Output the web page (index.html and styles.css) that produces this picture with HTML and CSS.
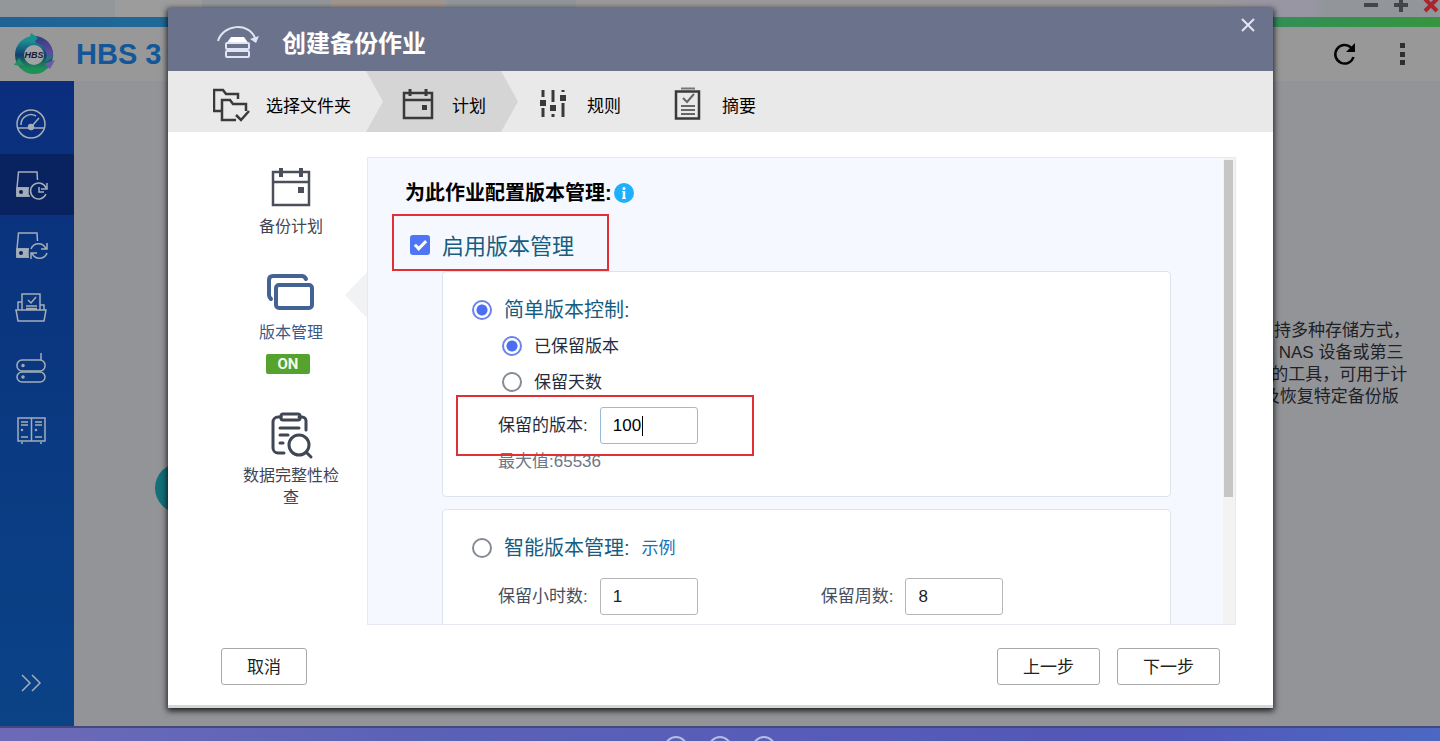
FILE: index.html
```html
<!DOCTYPE html>
<html lang="zh-CN">
<head>
    <meta charset="UTF-8">
    <meta name="viewport" content="width=device-width, initial-scale=1.0">
    <title>HBS 3</title>
    <link rel="stylesheet" href="styles.css">
</head>
<body>

<div class="window">
    <div class="titlebar">
        <button type="button" class="win-btn" aria-label="最小化">
            <svg width="16" height="16" viewBox="0 0 16 16"><path d="M1 8h14" stroke="#434549" stroke-width="4"/></svg>
        </button>
        <button type="button" class="win-btn" aria-label="最大化">
            <svg width="16" height="16" viewBox="0 0 16 16"><path d="M1 8h14M8 1v14" stroke="#434549" stroke-width="4"/></svg>
        </button>
        <button type="button" class="win-btn" aria-label="关闭窗口">
            <svg width="16" height="16" viewBox="0 0 16 16"><path d="M2 2l12 12M14 2L2 14" stroke="#a8242f" stroke-width="4"/></svg>
        </button>
    </div>
    <div class="accent"></div>

    <header class="app-header">
        <svg class="logo" width="42" height="44" viewBox="0 0 42 44">
            <defs>
                <linearGradient id="ringA" x1="0" y1="0" x2="0" y2="1">
                    <stop offset="0" stop-color="#1c8d93"/>
                    <stop offset="0.5" stop-color="#123f70"/>
                    <stop offset="1" stop-color="#1f9156"/>
                </linearGradient>
                <linearGradient id="ringB" x1="0" y1="0" x2="0" y2="1">
                    <stop offset="0" stop-color="#2b3f7d"/>
                    <stop offset="0.6" stop-color="#5d4a9c"/>
                    <stop offset="1" stop-color="#178078"/>
                </linearGradient>
            </defs>
            <circle cx="20" cy="23" r="14" fill="none" stroke="url(#ringA)" stroke-width="10"/>
            <path d="M20 4a19 19 0 0 1 19 22l-8 4A13 13 0 0 0 22 11z" fill="url(#ringB)"/>
            <path d="M17 1l7 5-6 6-3-4z" fill="#1a9090"/>
            <path d="M41 28l-5 9-6-5z" fill="#6c5aa8"/>
            <path d="M0 33l5-7 6 8z" fill="#228d60"/>
            <circle cx="20" cy="23" r="10" fill="#a3a3a5"/>
            <text x="20" y="26" text-anchor="middle" class="logo-text">HBS</text>
        </svg>
        <h1>HBS 3</h1>
        <button type="button" class="icon-btn" aria-label="刷新">
            <svg width="24" height="24" viewBox="0 0 24 24">
                <path d="M21.500 15A9.300 9.300 0 1 1 19 5.500" fill="none" stroke="#050505" stroke-width="2.500"/>
                <path d="M23 1v9h-9z" fill="#050505"/>
            </svg>
        </button>
        <button type="button" class="icon-btn" aria-label="更多">
            <svg width="24" height="24" viewBox="0 0 24 24" fill="#2e2e2e">
                <rect x="10" y="1" width="5" height="5"/><rect x="10" y="10" width="5" height="5"/><rect x="10" y="18" width="5" height="5"/>
            </svg>
        </button>
    </header>

    <div class="app-body">
        <nav class="sidebar">
            <a href="#overview" aria-label="概述">
                <svg width="34" height="34" viewBox="0 0 34 34">
                    <circle cx="17" cy="17" r="14"/>
                    <path d="M3 21h28M7 18a10 10 0 0 1 15-9M18 19l7-8"/>
                    <circle cx="17" cy="20" r="2.500" class="fill"/>
                </svg>
            </a>
            <a href="#backup" class="current" aria-label="备份与还原">
                <svg width="34" height="34" viewBox="0 0 34 34">
                    <path d="M3 20L4.500 4H23l.500 8M3 20h12M3 20v8h13"/>
                    <path class="fill" d="M3 20h11v8H3z"/>
                    <circle cx="7" cy="24" r="2" class="hole"/>
                    <path d="M32 20a8 8 0 1 0 0 6M33 15v6h-6M25 19v5h5"/>
                </svg>
            </a>
            <a href="#sync" aria-label="同步">
                <svg width="34" height="34" viewBox="0 0 34 34">
                    <path d="M3 20L4.500 4H23l.500 8M3 20h12M3 20v8h12"/>
                    <path class="fill" d="M3 20h11v8H3z"/>
                    <circle cx="7" cy="24" r="2" class="hole"/>
                    <path d="M17 20a8 8 0 0 1 15 0M33 14v6h-6M33 24a8 8 0 0 1-15 0M17 30v-6h6"/>
                </svg>
            </a>
            <a href="#jobs" aria-label="作业">
                <svg width="34" height="34" viewBox="0 0 34 34">
                    <path d="M2 20h30l-2 11H4zM8 20V4h18v16M4 20v-8h4M26 15h4v5M14 10l3 3 5-6M12 16h11M12 18.500h11"/>
                </svg>
            </a>
            <a href="#storage" aria-label="存储空间">
                <svg width="34" height="34" viewBox="0 0 34 34">
                    <rect x="3" y="9" width="28" height="11" rx="5"/>
                    <rect x="3" y="21" width="28" height="10" rx="5"/>
                    <path d="M27 9V2"/>
                    <circle cx="9" cy="14.500" r="1"/><circle cx="9" cy="26" r="1"/>
                </svg>
            </a>
            <a href="#services" aria-label="服务">
                <svg width="34" height="34" viewBox="0 0 34 34">
                    <path d="M4 6h27v23H4zM17.500 6v23M7 10h7M7 13h7M21 10h7M21 13h7M7 25h7M21 25h7M8 30v2M27 30v2"/>
                    <circle cx="8" cy="18" r="0.500"/><circle cx="22" cy="18" r="0.500"/>
                </svg>
            </a>
            <a href="#expand" class="expand" aria-label="展开">
                <svg width="34" height="34" viewBox="0 0 34 34"><path d="M8 8l8 8-8 8M18 8l8 8-8 8"/></svg>
            </a>
        </nav>
        <main class="content">
            <span class="round"></span>
            <p class="intro">支持多种存储方式，<br>的 NAS 设备或第三<br>3 的工具，可用于计<br>(及恢复特定备份版</p>
        </main>
    </div>
</div>

<footer class="taskbar">
    <span></span><span></span><span></span>
</footer>

<div class="overlay">
    <section class="dialog" role="dialog" aria-labelledby="dialogTitle">
        <div class="dialog-header">
            <svg width="44" height="52" viewBox="0 -7 44 52" fill="none" stroke="#dfe5f5" stroke-width="2">
                <path d="M2 16C7-1 33-3 39 13"/>
                <path d="M34 14l9-3-3 7z" fill="#dfe5f5" stroke="none"/>
                <path d="M10 19l5-7h13l5 7z" fill="#fff" stroke="none"/>
                <rect x="10" y="18" width="23" height="6" rx="1"/>
                <rect x="10" y="26" width="23" height="6" rx="1"/>
            </svg>
            <h2 id="dialogTitle">创建备份作业</h2>
            <button type="button" class="close" aria-label="关闭">
                <svg width="14" height="14" viewBox="0 0 14 14"><path d="M1 1l12 12M13 1L1 13" stroke="#e3e6f0" stroke-width="2"/></svg>
            </button>
        </div>

        <ol class="steps">
            <li>
                <svg width="38" height="36" viewBox="0 0 38 36" fill="none" stroke="#3a3a3a" stroke-width="2.500">
                    <path d="M8 24H1V3h9l3 4h12v5"/>
                    <path d="M23 33H9V13h8l3 4h13v7M23 28l5 5 8-9"/>
                </svg>
                选择文件夹
            </li>
            <li class="active">
                <svg width="38" height="36" viewBox="0 0 38 36" fill="none" stroke="#3a3a3a" stroke-width="2.500">
                    <path d="M5 6h28v25H5zM5 13h28"/><path d="M11 2v7M27 2v7" stroke-width="3"/>
                    <path d="M23 18h5v5h-5z" fill="#3a3a3a" stroke="none"/>
                </svg>
                计划
            </li>
            <li>
                <svg width="38" height="36" viewBox="0 0 38 36" fill="none" stroke="#3a3a3a" stroke-width="3">
                    <path d="M9 3v7M9 21v9M19 3v12M19 27v3M29 3v2M29 16v14"/>
                    <path d="M6 13h6v6H6zM16 18h6v6h-6zM26 8h6v6h-6z" fill="#3a3a3a" stroke="none"/>
                </svg>
                规则
            </li>
            <li>
                <svg width="38" height="36" viewBox="0 0 38 36" fill="none" stroke="#3a3a3a" stroke-width="2">
                    <path d="M7 4.500h23v27H7z" stroke-width="2.500"/><path d="M12 1.500h14" stroke="#777"/>
                    <path d="M14 11l4 4 7-8M12 19h14M12 23h14M12 27h14" stroke="#666"/>
                </svg>
                摘要
            </li>
        </ol>

        <div class="dialog-body">
            <nav class="side-nav">
                <a href="#schedule">
                    <svg width="48" height="48" viewBox="0 0 48 48" fill="none" stroke="#4b4f5a" stroke-width="2.500">
                        <path d="M6 9h36v33H6zM6 19h36"/><path d="M14 5v9M34 5v9" stroke-width="4"/>
                        <path d="M31 24h6v6h-6z" fill="#4b4f5a" stroke="none"/>
                    </svg>
                    备份计划
                </a>
                <a href="#versions" class="selected">
                    <svg width="48" height="48" viewBox="0 0 48 48" fill="none" stroke="#426394" stroke-width="4" stroke-linecap="round">
                        <path d="M4 30c-1-1-2-2-2-4V11c0-2 1-4 4-4h29c2 0 3 1 4 3"/>
                        <rect x="9" y="16" width="36" height="23" rx="3"/>
                    </svg>
                    版本管理
                    <span class="badge">ON</span>
                </a>
                <a href="#integrity">
                    <svg width="48" height="48" viewBox="0 0 48 48" fill="none" stroke="#3e4753" stroke-width="3" stroke-linecap="round" stroke-linejoin="round">
                        <path d="M14 5h-3a5 5 0 0 0-5 5v26a5 5 0 0 0 5 5h6M32 5h3a4 4 0 0 1 4 4v9"/>
                        <rect x="14" y="2" width="19" height="6" rx="2"/>
                        <path d="M13 16h19M13 23h8M13 31h3M39 40l5 5"/>
                        <circle cx="32" cy="33" r="10"/>
                    </svg>
                    数据完整性检查
                </a>
            </nav>

            <div class="panel">
                <form class="settings" id="settings">
                    <h3>为此作业配置版本管理:
                        <svg width="20" height="20" viewBox="0 0 20 20">
                            <circle cx="10" cy="10" r="10" fill="#1eb0fb"/>
                            <circle cx="10" cy="5.500" r="1.500" fill="#fff"/>
                            <path d="M10 8v8" stroke="#fff" stroke-width="2.500"/>
                            <path d="M8 8.500h2M8 15.500h4" stroke="#fff"/>
                        </svg>
                    </h3>

                    <div class="enable">
                        <input type="checkbox" id="enable" checked>
                        <label for="enable">启用版本管理</label>
                    </div>

                    <div class="card">
                        <div class="row mode">
                            <input type="radio" id="simple" name="mode" checked>
                            <label for="simple">简单版本控制:</label>
                        </div>
                        <div class="row sub">
                            <input type="radio" id="keepVersions" name="keep" checked>
                            <label for="keepVersions">已保留版本</label>
                        </div>
                        <div class="row sub">
                            <input type="radio" id="keepDays" name="keep">
                            <label for="keepDays">保留天数</label>
                        </div>
                        <div class="field marked">
                            <label for="versions">保留的版本:</label>
                            <span class="editing">
                                <input type="text" id="versions" value="100">
                            </span>
                        </div>
                        <p class="hint">最大值:65536</p>
                    </div>

                    <div class="card">
                        <div class="row mode">
                            <input type="radio" id="smart" name="mode">
                            <label for="smart">智能版本管理:</label>
                            <a href="#example">示例</a>
                        </div>
                        <div class="smart-fields">
                            <div class="field">
                                <label for="hours">保留小时数:</label>
                                <input type="text" id="hours" value="1">
                            </div>
                            <div class="field">
                                <label for="weeks">保留周数:</label>
                                <input type="text" id="weeks" value="8">
                            </div>
                        </div>
                    </div>
                </form>
                <div class="scrollbar"><div class="thumb"></div></div>
            </div>
        </div>

        <div class="dialog-footer">
            <button type="button" class="cancel">取消</button>
            <button type="button">上一步</button>
            <button type="submit" form="settings">下一步</button>
        </div>
    </section>
</div>

</body>
</html>
```
FILE: styles.css
```css
*, *::before, *::after {
    box-sizing: border-box;
}
body {
    margin: 0;
    height: 100vh;
    display: flex;
    flex-direction: column;
    overflow: hidden;
    font-family: "Liberation Sans", "Noto Sans CJK SC", sans-serif;
    font-size: 17px;
    color: #222;
}
h1, h2, h3, p, ol {
    margin: 0;
    padding: 0;
}
a {
    text-decoration: none;
}
button, input {
    font-family: inherit;
    font-size: 17px;
}
svg {
    flex-shrink: 0;
}

/* app window */
.window {
    flex: 1;
    min-height: 0;
    display: flex;
    flex-direction: column;
}
.titlebar {
    height: 17px;
    display: flex;
    justify-content: flex-end;
    gap: 14px;
    padding-right: 1px;
    background: linear-gradient(90deg, #93979a 0 8%, #9b9c9b 8% 14%, #92969a 14% 23%, #a1968f 23% 31%, #92969b 31% 40%, #9a9a9a 40% 84%, #9896a3 87% 91%, #92969b 92%);
}
.win-btn, .icon-btn, .close {
    border: none;
    background: none;
    padding: 0;
    cursor: pointer;
}
.win-btn {
    width: 16px;
    height: 10px;
    display: flex;
    align-items: center;
    justify-content: center;
}
.accent {
    height: 10px;
    background: linear-gradient(90deg, #1f6296, #1f7fa0 45%, #338f54 90%, #36953f);
}
.app-header {
    height: 54px;
    display: flex;
    align-items: center;
    gap: 34px;
    padding: 0 26px 0 14px;
    background-color: #989898;
}
.app-header h1 {
    flex: 1;
    margin-left: -14px;
    font-size: 29px;
    color: #145799;
}
.icon-btn {
    width: 24px;
    height: 24px;
}
.logo-text {
    font-size: 9px;
    font-weight: bold;
    font-style: italic;
    fill: #161a35;
}
.app-body {
    flex: 1;
    min-height: 0;
    display: flex;
}
.sidebar {
    width: 74px;
    padding: 12px 0;
    display: flex;
    flex-direction: column;
    background: linear-gradient(#0a2e7d, #0a3880 45%, #0b4387);
}
.sidebar a {
    height: 61px;
    padding-left: 14px;
    display: flex;
    align-items: center;
}
.sidebar a.current {
    background-color: #092360;
}
.sidebar .expand {
    margin-top: auto;
}
.sidebar svg {
    fill: none;
    stroke: #a4adb8;
    stroke-width: 1.5;
}
.sidebar .fill {
    fill: #a4adb8;
}
.sidebar .hole {
    fill: #092360;
    stroke: none;
}
.content {
    flex: 1;
    position: relative;
    background-color: #939497;
}
.intro {
    width: 183px;
    margin: 239px 0 0 auto;
    line-height: 22px;
    white-space: nowrap;
    color: #1e2125;
}
.round {
    position: absolute;
    left: 81px;
    top: 382px;
    width: 50px;
    height: 50px;
    border-radius: 50%;
    background-color: #137078;
}
.taskbar {
    height: 15px;
    display: flex;
    justify-content: center;
    gap: 20px;
    padding-top: 8px;
    overflow: hidden;
    border-top: 2px solid #454878;
    background: linear-gradient(90deg, #6c6ab8, #5a62b6 30%, #5257b8 80%, #4c68c4);
}
.taskbar span {
    width: 24px;
    height: 24px;
    flex-shrink: 0;
    border: 2px solid #b9bbe4;
    border-radius: 50%;
}

/* wizard dialog */
.overlay {
    position: absolute;
    inset: 0;
    display: flex;
    padding: 8px 167px 33px 168px;
}
.dialog {
    flex: 1;
    min-width: 0;
    display: flex;
    flex-direction: column;
    background-color: #fff;
    border-bottom: 3px solid #d5d6d7;
    box-shadow: 0 2px 6px 1px rgba(0, 0, 0, 0.8);
}
.dialog-header {
    height: 63px;
    display: flex;
    align-items: flex-start;
    gap: 22px;
    padding: 10px 18px 0 48px;
    background-color: #6b728b;
}
.dialog-header h2 {
    flex: 1;
    font-size: 24px;
    line-height: 52px;
    color: #fff;
}
.close {
    width: 14px;
    height: 14px;
    line-height: 0;
}
.steps {
    height: 61px;
    display: flex;
    list-style: none;
    padding-left: 12px;
    background-color: #e9e9e9;
    color: #000;
    isolation: isolate;
}
.steps li {
    position: relative;
    display: flex;
    align-items: center;
    gap: 15px;
    padding: 6px 15px 0 33px;
}
.steps .active::before {
    content: "";
    position: absolute;
    inset: 0 -17px 0 0;
    z-index: -1;
    background-color: #d5d5d5;
    clip-path: polygon(0 0, calc(100% - 17px) 0, 100% 50%, calc(100% - 17px) 100%, 0 100%, 17px 50%);
}
.dialog-body {
    flex: 1;
    min-height: 0;
    display: flex;
    padding: 25px 37px 0 73px;
}
.side-nav {
    width: 100px;
    margin-right: 26px;
    padding-top: 6px;
    display: flex;
    flex-direction: column;
    gap: 31px;
}
.side-nav a {
    position: relative;
    display: flex;
    flex-direction: column;
    align-items: center;
    gap: 5px;
    font-size: 16px;
    line-height: 22px;
    text-align: center;
    color: #3f4553;
}
.side-nav a.selected {
    color: #3b5a8c;
}
.side-nav .selected::after {
    content: "";
    position: absolute;
    top: 3px;
    right: -26px;
    width: 22px;
    height: 46px;
    background-color: #f1f2f4;
    clip-path: polygon(0 50%, 100% 0, 100% 100%);
}
.badge {
    width: 44px;
    height: 20px;
    margin: 5px 6px 7px 0;
    border-radius: 2px;
    background-color: #55a22c;
    color: #f2f9ea;
    font-family: Roboto, sans-serif;
    font-size: 15px;
    font-weight: bold;
    line-height: 20px;
}
.panel {
    flex: 1;
    min-width: 0;
    display: flex;
    overflow: hidden;
    border: 1px solid #e6eaf0;
    background-color: #f5f9ff;
}
.settings {
    flex: 1;
    padding: 20px 52px 0 37px;
}
.settings h3 {
    display: flex;
    align-items: center;
    gap: 2px;
    font-size: 20px;
    line-height: 30px;
    color: #000;
}
.settings label,
.mode a {
    padding-bottom: 3px;
}
.enable {
    position: relative;
    display: flex;
    align-items: center;
    gap: 12px;
    height: 32px;
    margin: 21px 0 10px;
    padding-left: 5px;
    font-size: 22px;
    color: #165d80;
}
/* red highlight frames */
.enable::after,
.marked::after {
    content: "";
    position: absolute;
    border: 2px solid #e03036;
    pointer-events: none;
}
.enable::after {
    left: -13px;
    top: -15px;
    width: 217px;
    height: 57px;
}
.marked::after {
    left: -42px;
    top: -5px;
    width: 298px;
    height: 61px;
}
input[type="checkbox"],
input[type="radio"] {
    appearance: none;
    flex-shrink: 0;
    width: 20px;
    height: 20px;
    margin: 0;
    background-color: #fff;
    border: 2px solid #858b96;
}
input[type="radio"] {
    border-radius: 50%;
}
input[type="radio"]:checked {
    border-color: #6b83ea;
    background: radial-gradient(circle, #4a6ff2 0 5px, #fff 6px);
}
input[type="checkbox"]:checked {
    border: none;
    border-radius: 3px;
    background-color: #4f74f6;
    display: grid;
    place-items: center;
}
input[type="checkbox"]:checked::before {
    content: "";
    width: 7px;
    height: 12px;
    margin-top: -3px;
    border: solid #fff;
    border-width: 0 3px 3px 0;
    transform: rotate(45deg);
}
.card {
    min-height: 226px;
    margin: 0 0 12px 37px;
    padding: 20px 29px;
    border: 1px solid #dde4ec;
    border-radius: 4px;
    background-color: #fff;
}
.row {
    height: 36px;
    display: flex;
    align-items: center;
    gap: 12px;
    color: #252d3d;
}
.mode label {
    font-size: 20px;
    color: #165d80;
}
.mode a {
    color: #1670b8;
}
.sub {
    padding-left: 30px;
}
.field {
    position: relative;
    height: 50px;
    margin-left: 26px;
    display: flex;
    align-items: center;
    gap: 12px;
    color: #252d3d;
}
.field input {
    width: 98px;
    height: 37px;
    padding: 1px 12px 0;
    border: 1px solid #b4b7ba;
    border-radius: 3px;
    background-color: #fff;
    color: #222;
}
.editing {
    position: relative;
    display: flex;
}
.editing input {
    border-color: #9bbad8;
    color: #000;
}
/* text caret */
.editing::after {
    content: "";
    position: absolute;
    left: 42px;
    top: 9px;
    width: 1px;
    height: 20px;
    background-color: #000;
}
.hint {
    margin-left: 26px;
    line-height: 24px;
    color: #6d7684;
}
.smart-fields {
    display: flex;
    gap: 97px;
    margin-top: 5px;
}
.smart-fields label {
    color: #454f60;
}
.scrollbar {
    width: 12px;
    padding: 2px 2px 0 1px;
    background-color: #f3f3f3;
}
.thumb {
    height: 337px;
    background-color: #c6c6c6;
}
.dialog-footer {
    display: flex;
    gap: 17px;
    padding: 23px 53px 20px;
}
.dialog-footer button {
    width: 103px;
    height: 37px;
    padding-bottom: 4px;
    border: 1px solid #aaa;
    border-radius: 3px;
    background-color: #fff;
    color: #222;
    cursor: pointer;
}
.dialog-footer .cancel {
    width: 86px;
    margin-right: auto;
}
```
